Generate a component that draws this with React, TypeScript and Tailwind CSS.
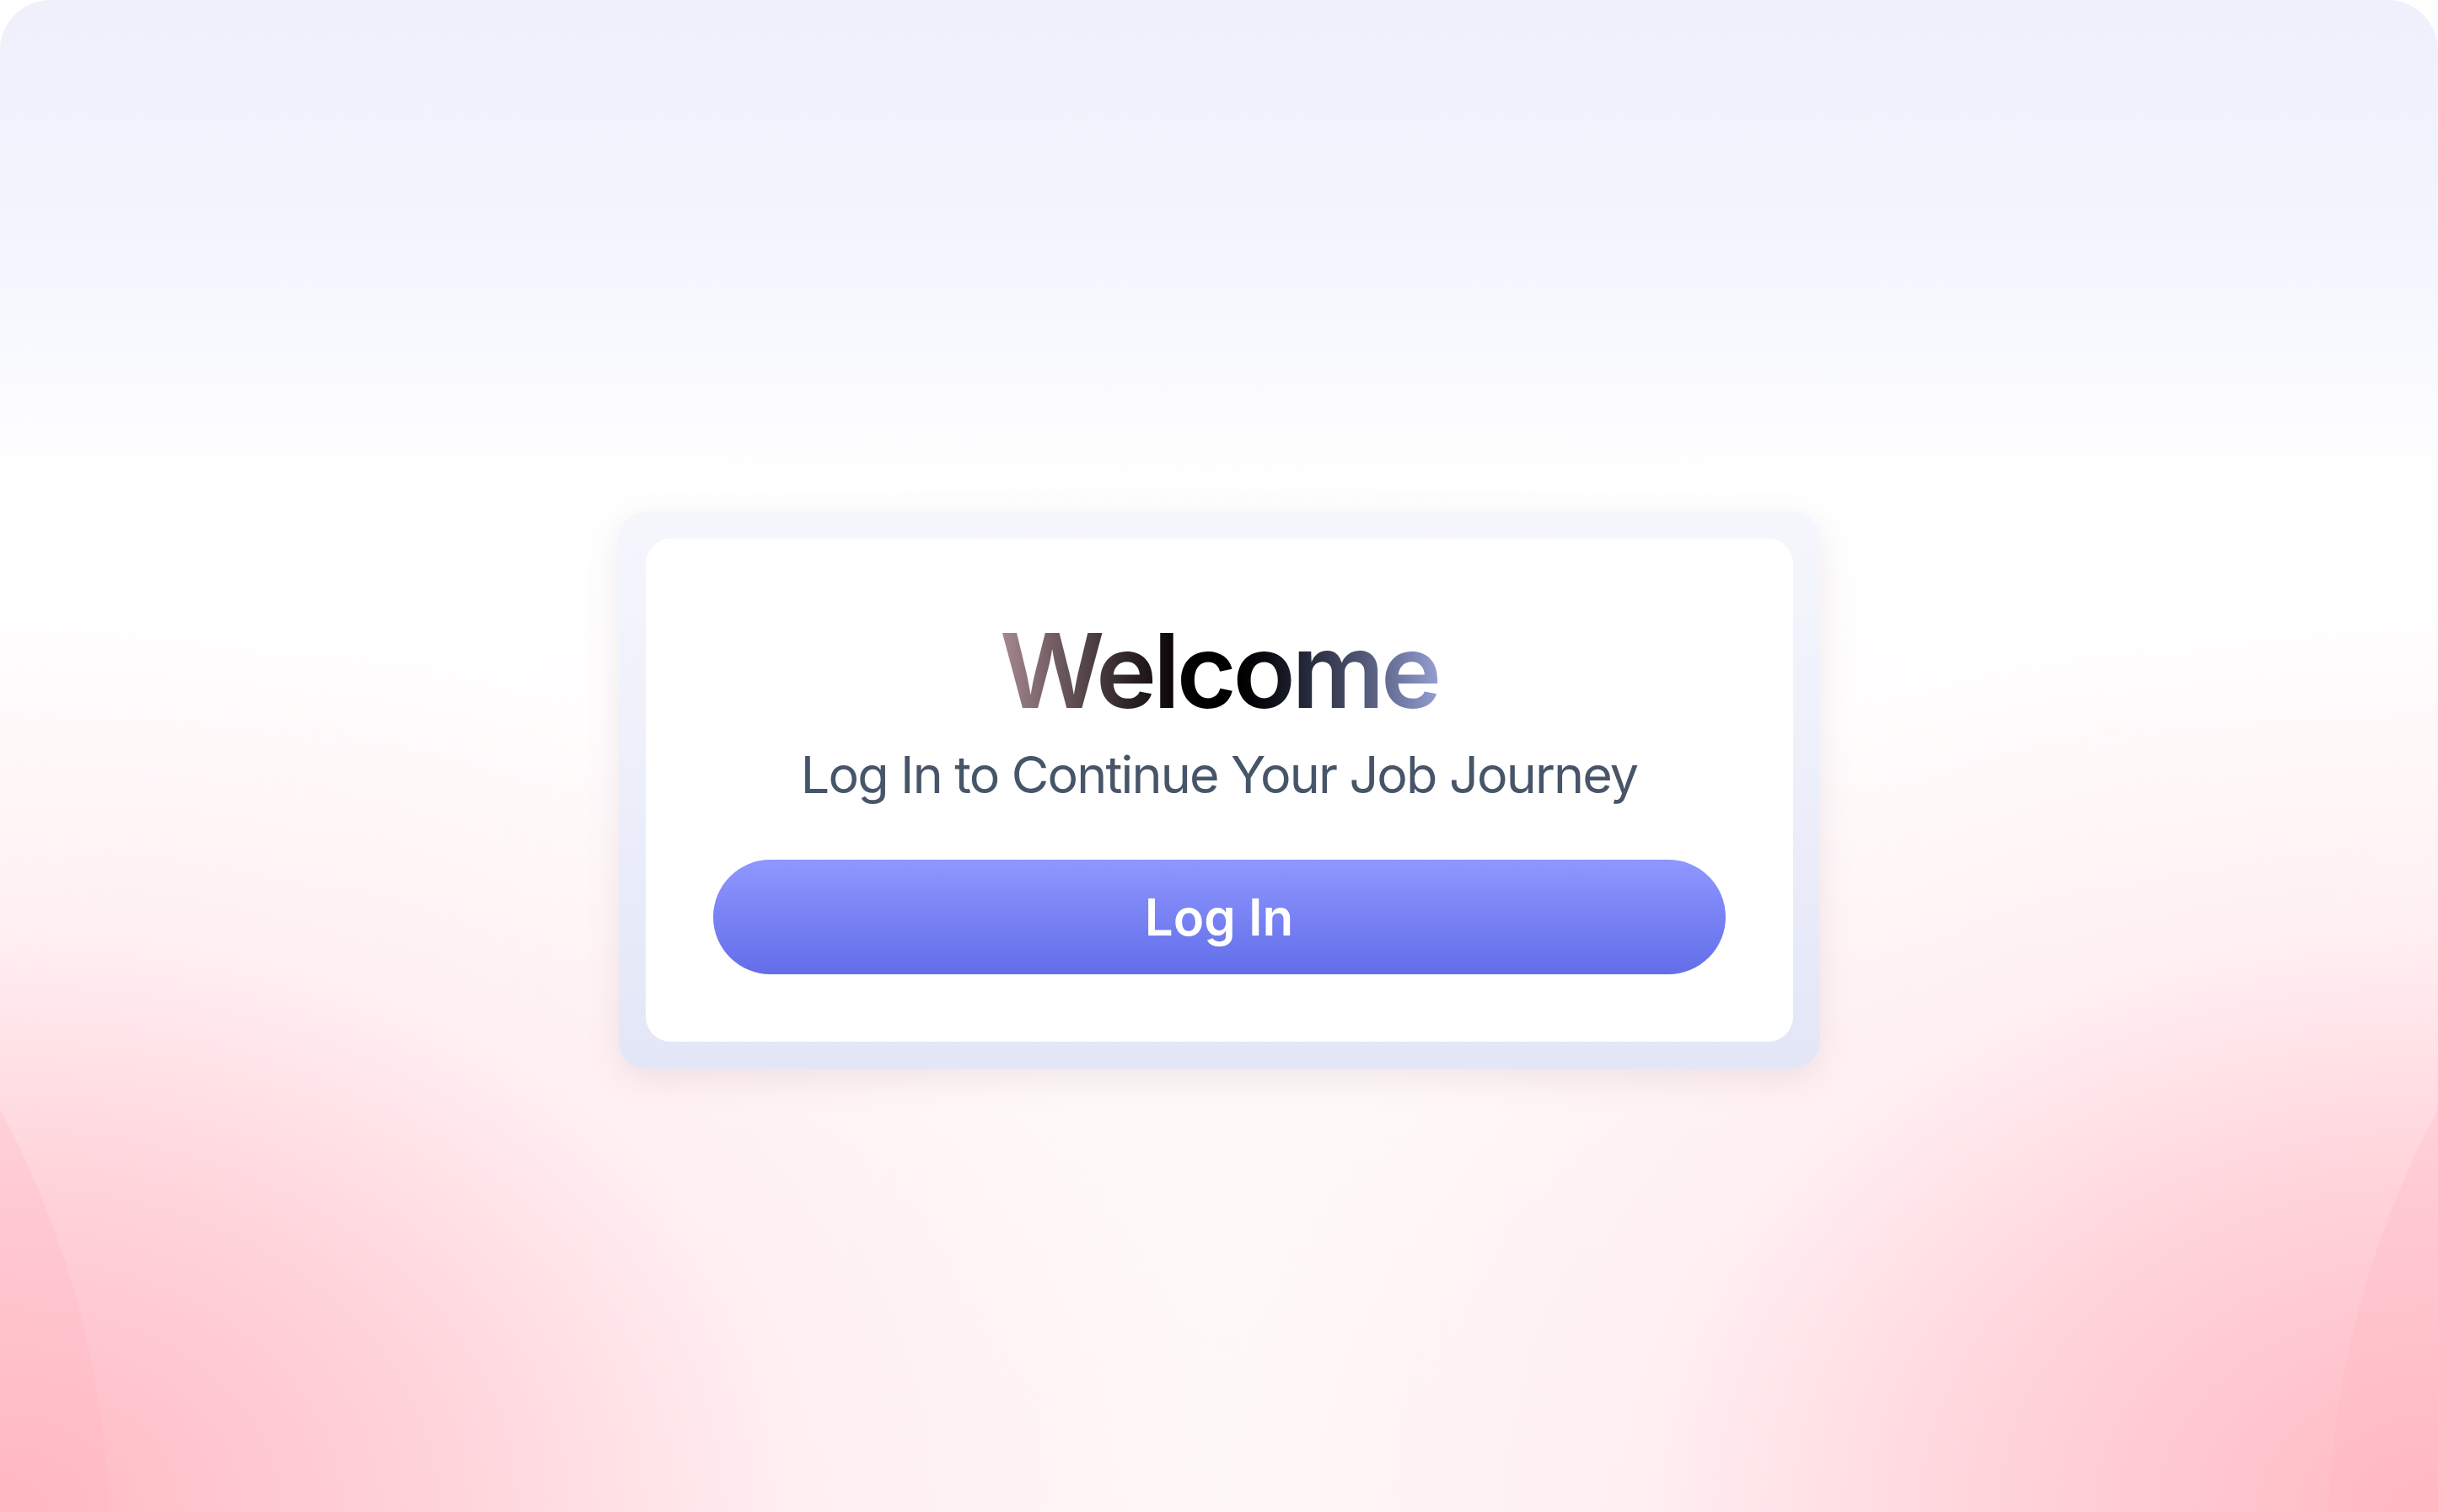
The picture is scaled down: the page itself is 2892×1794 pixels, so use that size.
export default function App() {
  return (
    <div className="w-full h-[1794px] bg-white overflow-hidden" style={{ fontFamily: "Inter, 'Noto Sans', sans-serif" }}>
      <main className="relative w-full h-full rounded-t-[60px] overflow-hidden bg-white bg-[radial-gradient(ellipse_50%_60%_at_0%_100%,#ffb8c3_0%,#ffd2d9_35%,rgba(255,232,236,0.6)_65%,rgba(255,240,242,0)_100%),radial-gradient(ellipse_50%_60%_at_100%_100%,#ffb8c3_0%,#ffd2d9_35%,rgba(255,232,236,0.6)_65%,rgba(255,240,242,0)_100%),radial-gradient(ellipse_60%_75%_at_50%_100%,rgba(255,247,247,0.9)_0%,rgba(255,247,247,0)_100%),linear-gradient(to_bottom,#eff0fb_0%,#f1f3fd_12%,#ffffff_32%,#fffafa_100%)]">
        {/* soft arcs in the bottom corners */}
        <div className="absolute w-[2160px] h-[2160px] rounded-full bg-[#ffb3c0]/25 left-[-2030px] top-[750px]"></div>
        <div className="absolute w-[2160px] h-[2160px] rounded-full bg-[#ffb3c0]/25 right-[-2030px] top-[750px]"></div>

        <div className="relative z-10 flex h-full items-center justify-center pt-[80px]">
          <div className="w-[1425px] p-8 rounded-[32px] bg-gradient-to-b from-[#f6f7fd] to-[#e3e6f7] shadow-[0_12px_40px_rgba(120,90,110,0.12)]">
            <div className="flex flex-col items-center rounded-[30px] bg-white px-[80px] pt-[96px] pb-[80px]">
              <h1 className="text-[122px] font-semibold leading-none tracking-[-0.035em] bg-gradient-to-r from-[#a88b92] via-[#000000] to-[#949ed2] bg-clip-text text-transparent">
                Welcome
              </h1>
              <p className="mt-8 text-[61px] leading-none tracking-[-0.03em] text-[#475569]">
                Log In to Continue Your Job Journey
              </p>
              <button className="mt-[70px] flex h-[136px] w-full items-center justify-center rounded-full bg-gradient-to-b from-[#8f97ff] to-[#636de9] text-[60px] font-semibold text-white">
                Log In
              </button>
            </div>
          </div>
        </div>
      </main>
    </div>
  )
}
